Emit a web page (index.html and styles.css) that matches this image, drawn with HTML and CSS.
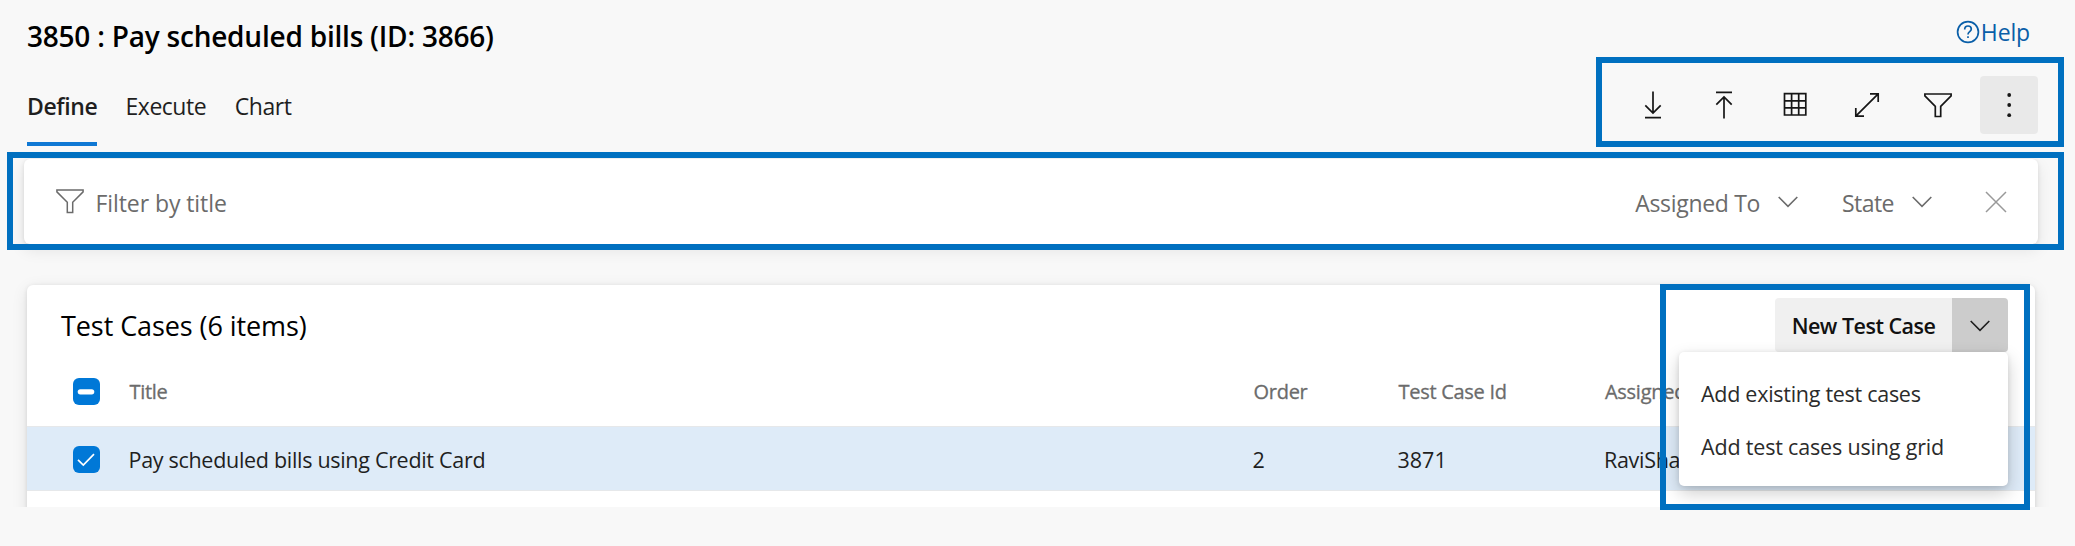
FILE: index.html
```
<!DOCTYPE html>
<html lang="en">
<head>
<meta charset="utf-8">
<title>Pay scheduled bills</title>
<link rel="stylesheet" href="styles.css">
</head>
<body>
<header class="header">
  <div class="header-left">
    <h1 class="page-title">3850 : Pay scheduled bills (ID: 3866)</h1>
    <nav class="tabs">
      <a class="tab active">Define</a>
      <a class="tab execute">Execute</a>
      <a class="tab chart">Chart</a>
    </nav>
  </div>
  <div class="header-right">
    <a class="help">
      <svg width="24" height="24" viewBox="0 0 24 24"><circle cx="12" cy="12" r="10.4"/><path d="M8.7 9.4C8.7 7.2 10 6 12 6s3.300 1.200 3.300 3c0 2.700-3.300 2.700-3.300 5.400"/><path d="M12 16.200v1.900"/></svg><span>Help</span>
    </a>
    <div class="toolbar">
      <button class="tool"><svg width="58" height="58" viewBox="0 0 58 58"><path d="M29 15.500V37M21.300 29.300l7.700 7.700 7.700-7.700M21 41.700h16"/></svg></button>
      <button class="tool"><svg width="58" height="58" viewBox="0 0 58 58"><path d="M29 42.500V21M21.300 28.700l7.700-7.700 7.700 7.700M21 16.300h16"/></svg></button>
      <button class="tool"><svg width="58" height="58" viewBox="0 0 58 58"><path d="M18.500 17.700h21.300v21.300H18.500zM25.600 17.700v21.300M32.700 17.700v21.300M18.500 24.800h21.300M18.500 31.900h21.300"/></svg></button>
      <button class="tool"><svg width="58" height="58" viewBox="0 0 58 58"><path d="M17.800 40.200L40.200 17.900M32 17.900h8.200v8.200M17.800 32v8.200H26"/></svg></button>
      <button class="tool"><svg width="58" height="58" viewBox="0 0 58 58"><path d="M15.900 18h26.200v1.900L31.700 30.300v10.200h-5.400V30.300L15.900 19.900z"/></svg></button>
      <button class="tool more"><svg width="58" height="58" viewBox="0 0 58 58"><g class="dots"><circle cx="29.200" cy="19" r="1.900"/><circle cx="29.200" cy="29" r="1.900"/><circle cx="29.200" cy="39.200" r="1.900"/></g></svg></button>
    </div>
  </div>
</header>

<section class="filter-bar">
  <svg class="funnel" width="28" height="26" viewBox="0 0 28 26"><path d="M.9 1h26.200v1.900L16.700 13.300v10.200h-5.400V13.300L.9 2.900z"/></svg>
  <span class="filter-text">Filter by title</span>
  <span class="assigned-filter">Assigned To</span>
  <svg class="chevron" width="20" height="12" viewBox="0 0 20 12"><path d="M.7 1l9.300 9.300L19.300 1"/></svg>
  <span class="state-filter">State</span>
  <svg class="chevron" width="20" height="12" viewBox="0 0 20 12"><path d="M.7 1l9.300 9.300L19.300 1"/></svg>
  <svg class="close" width="22" height="22" viewBox="0 0 22 22"><path d="M1 1l20 20M21 1L1 21"/></svg>
</section>

<main class="content">
  <section class="panel">
    <div class="panel-head">
      <h2 class="panel-title">Test Cases (6 items)</h2>
      <div class="split-button">
        <button class="new-case">New Test Case</button>
        <button class="split-arrow"><svg class="chevron" width="20" height="12" viewBox="0 0 20 12"><path d="M.7 1l9.300 9.300L19.300 1"/></svg></button>
        <div class="menu">
          <a class="menu-item">Add existing test cases</a>
          <a class="menu-item grid-item">Add test cases using grid</a>
        </div>
      </div>
    </div>
    <div class="row row-head">
      <span class="check"><svg width="27" height="27" viewBox="0 0 27 27"><path class="dash" d="M7.300 13.800h11.400"/></svg></span>
      <span>Title</span><span>Order</span><span>Test Case Id</span><span class="clip">Assigned</span>
    </div>
    <div class="row row-data">
      <span class="check"><svg width="27" height="27" viewBox="0 0 27 27"><path d="M5 13.800l5.300 5.200L21 8.200"/></svg></span>
      <span>Pay scheduled bills using Credit Card</span><span class="num">2</span><span class="num">3871</span><span class="clip">RaviSha</span>
    </div>
  </section>
</main>

<div class="highlight highlight-tools"></div>
<div class="highlight highlight-filter"></div>
<div class="highlight highlight-menu"></div>
</body>
</html>
```
FILE: styles.css
```
* { box-sizing: border-box; }
body {
  margin: 0;
  width: 2075px;
  height: 546px;
  position: relative;
  overflow: hidden;
  background: #f8f8f8;
  color: #1f1f1f;
  font-family: "Open Sans", "Noto Sans", sans-serif;
}
button {
  border: 0;
  padding: 0;
  font-family: inherit;
}
svg {
  display: block;
  flex: none;
  fill: none;
  stroke: currentColor;
  stroke-width: 1.7;
}

/* Page header */
.header {
  display: flex;
  justify-content: space-between;
  height: 159px;
  padding: 0 37px 0 27px;
}
.header-left { padding-top: 18px; }
.page-title {
  margin: 0;
  color: #000;
  font-size: 28px;
  font-weight: 600;
  line-height: 36px;
  letter-spacing: -0.22px;
}
.tabs {
  display: flex;
  gap: 28.500px;
  margin-top: 36px;
}
.tab {
  height: 56px;
  font-size: 23px;
  line-height: 33px;
}
.active {
  width: 70px;
  border-bottom: 4px solid #0f78d4;
  font-weight: 600;
  letter-spacing: -0.4px;
}
.execute { letter-spacing: -0.47px; }
.chart { letter-spacing: -0.4px; }
.header-right {
  display: flex;
  flex-direction: column;
  align-items: flex-end;
  padding-top: 16px;
}
.help {
  display: flex;
  align-items: center;
  margin-right: 8px;
  color: #0a5fa8;
  font-size: 23px;
  line-height: 32px;
  letter-spacing: -0.15px;
}
.help svg { margin-right: 0.500px; }
.toolbar {
  display: flex;
  gap: 13.200px;
  margin-top: 28px;
}
.tool {
  width: 58px;
  height: 58px;
  border-radius: 4px;
  background: none;
  color: #161616;
}
.more { background: #e9e9e9; }
.dots {
  fill: currentColor;
  stroke: none;
}

/* Filter bar */
.filter-bar {
  display: flex;
  align-items: center;
  width: 2014px;
  height: 85px;
  margin-left: 24px;
  padding: 2px 31px 0 32px;
  border-radius: 6px;
  background: #fff;
  box-shadow: 0 6px 16px rgba(0, 0, 0, .09), 0 1px 4px rgba(0, 0, 0, .1);
  color: #6b6b6b;
  font-size: 23px;
  line-height: 32px;
}
.funnel {
  margin: -1px 12px 0 -0.500px;
  stroke-width: 1.5;
}
.filter-text {
  flex: 1;
  letter-spacing: -0.08px;
}
.chevron { stroke-width: 1.6; }
.filter-bar .chevron { margin-top: -2px; }
.assigned-filter {
  margin-right: 18px;
  letter-spacing: -0.32px;
}
.state-filter {
  margin: 0 18px 0 44px;
  letter-spacing: -0.55px;
}
.close {
  margin: -2px 0 0 53px;
  color: #999;
  stroke-width: 1.5;
}

/* Test case list */
.content {
  height: 263px;
  padding: 40.500px 40px 0 27px;
  overflow: hidden;
}
.panel {
  height: 300px;
  border-radius: 6px;
  background: #fff;
  box-shadow: 0 4px 16px rgba(0, 0, 0, .1), 0 1px 4px rgba(0, 0, 0, .1);
}
.panel-head {
  display: flex;
  justify-content: space-between;
  height: 69.500px;
  padding: 13.500px 27px 0 34px;
}
.panel-title {
  margin: 10px 0 0;
  color: #000;
  font-size: 27px;
  font-weight: 400;
  line-height: 36px;
  letter-spacing: -0.08px;
}
.split-button {
  display: flex;
  position: relative;
  height: 54px;
}
.new-case {
  width: 177px;
  padding-top: 1px;
  border-radius: 4px 0 0 4px;
  background: #f0f0f0;
  color: #111;
  font-size: 21.500px;
  font-weight: 600;
  letter-spacing: -0.52px;
}
.split-arrow {
  display: flex;
  align-items: center;
  justify-content: center;
  width: 56px;
  padding-top: 2px;
  border-radius: 0 4px 4px 0;
  background: #ccc;
  color: #1f1f1f;
}
.menu {
  position: absolute;
  top: 54px;
  right: 0;
  width: 329px;
  height: 134px;
  padding: 15px 22px 0;
  border-radius: 5px;
  background: #fff;
  box-shadow: 0 7px 18px rgba(0, 0, 0, .2), 0 1px 5px rgba(0, 0, 0, .1);
}
.menu-item {
  display: block;
  color: #2b2b2b;
  font-size: 21.500px;
  line-height: 53px;
  letter-spacing: -0.28px;
}
.grid-item { letter-spacing: -0.18px; }
.row {
  display: grid;
  grid-template-columns: 55.500px 1124px 145px 206.500px 75px;
  align-items: center;
  padding-left: 46px;
}
.row-head {
  height: 72px;
  padding-top: 2px;
  color: #6b6b6b;
  font-size: 20px;
  font-weight: 500;
  letter-spacing: -0.28px;
  -webkit-text-stroke: 0.300px #6b6b6b;
}
.row-head > span:not(.check) { padding-left: 1px; }
.row-data {
  height: 65px;
  padding-top: 1px;
  border: solid #e6e8ea;
  border-width: 1px 0;
  background: #deebf8;
  font-size: 21.500px;
  letter-spacing: -0.3px;
}
.num { letter-spacing: 0; }
.clip {
  overflow: hidden;
  white-space: nowrap;
}
.check {
  width: 27px;
  height: 27px;
  border-radius: 6px;
  background: #0078d7;
  color: #fff;
}
.check .dash {
  stroke-width: 5.200;
  stroke-linecap: round;
}

/* Callout frames */
.highlight {
  position: absolute;
  border: 6px solid #0070c0;
}
.highlight-tools {
  left: 1596px;
  top: 57px;
  width: 468px;
  height: 90px;
}
.highlight-filter {
  left: 7px;
  top: 152px;
  width: 2057px;
  height: 98px;
}
.highlight-menu {
  left: 1660px;
  top: 284px;
  width: 370px;
  height: 226px;
}
```
